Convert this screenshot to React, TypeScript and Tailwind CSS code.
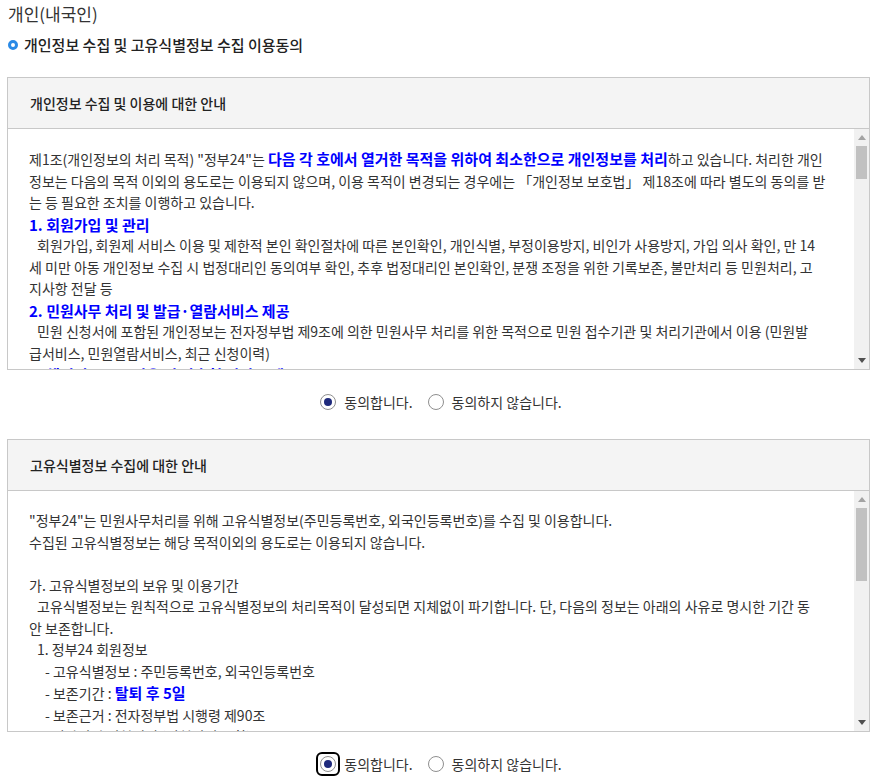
import type { ReactNode } from "react";

const B = ({ children }: { children: ReactNode }) => (
  <span className="text-[15px] font-bold text-[#0000ff]">{children}</span>
);

const H = ({ children }: { children: ReactNode }) => (
  <p className="text-[15px] font-bold text-[#0000ff]">{children}</p>
);

const Radio = ({
  checked,
  focused,
  label,
}: {
  checked?: boolean;
  focused?: boolean;
  label: string;
}) => (
  <label className="flex items-center gap-[8px]">
    <span
      className={`-m-[2px] flex h-[20px] w-[20px] items-center justify-center rounded-[4px] ${
        focused ? "outline-2 outline-black" : ""
      }`}
    >
      <span className="flex h-[16px] w-[16px] items-center justify-center rounded-full border border-[#8f8f8f] bg-white">
        {checked && <span className="h-[8px] w-[8px] rounded-full bg-[#1f2a7c]" />}
      </span>
    </span>
    <span>{label}</span>
  </label>
);

const Agree = ({ focused }: { focused?: boolean }) => (
  <div className="flex h-[20px] items-center justify-center gap-[15px] text-[14px] text-[#333]">
    <Radio checked focused={focused} label="동의합니다." />
    <Radio label="동의하지 않습니다." />
  </div>
);

// drawn scrollbar, scrolled to the top
const Scrollbar = ({ thumb }: { thumb: number }) => (
  <div className="flex w-[15px] shrink-0 flex-col bg-[#f1f1f1]">
    <div className="flex h-[17px] items-center justify-center">
      <svg width="8" height="5" viewBox="0 0 8 5">
        <path d="M0 5 L4 0 L8 5 Z" fill="#a3a3a3" />
      </svg>
    </div>
    <div className="flex-1 px-[2px]">
      <div className="w-full bg-[#c1c1c1]" style={{ height: thumb }} />
    </div>
    <div className="flex h-[17px] items-center justify-center">
      <svg width="8" height="5" viewBox="0 0 8 5">
        <path d="M0 0 L8 0 L4 5 Z" fill="#505050" />
      </svg>
    </div>
  </div>
);

const Box = ({
  title,
  thumb,
  children,
}: {
  title: string;
  thumb: number;
  children: ReactNode;
}) => (
  <div className="ml-[7px] mr-[12px] border border-[#c8c8c8]">
    <div className="flex h-[51px] items-center border-b border-[#c8c8c8] bg-[#f4f4f4] px-[22px] text-[14px] font-medium text-[#222]">
      {title}
    </div>
    <div className="flex h-[240px]">
      <div className="flex-1 overflow-hidden pl-[21px] pr-[20px] pt-[19px] text-[14px] leading-[21.5px] text-[#333]">
        {children}
      </div>
      <Scrollbar thumb={thumb} />
    </div>
  </div>
);

export default function App() {
  return (
    <div className="min-h-[784px] w-[882px] bg-white pt-[2px] font-['Noto_Sans_CJK_KR','Noto_Sans',sans-serif] text-[#333]">
      <h2 className="ml-[8px] text-[17px] leading-[24px] text-[#333]">개인(내국인)</h2>
      <div className="ml-[8px] mt-[8px] flex h-[22px] items-center gap-[6px] text-[15px] font-medium text-[#222]">
        <span className="h-[10px] w-[10px] rounded-full border-[3px] border-[#2a8ae6]" />
        개인정보 수집 및 고유식별정보 수집 이용동의
      </div>

      <div className="mt-[21px]">
        <Box title="개인정보 수집 및 이용에 대한 안내" thumb={33}>
          <p>
            제1조(개인정보의 처리 목적) "정부24"는{" "}
            <B>다음 각 호에서 열거한 목적을 위하여 최소한으로 개인정보를 처리</B>
            하고 있습니다. 처리한 개인정보는 다음의 목적 이외의 용도로는 이용되지 않으며, 이용
            목적이 변경되는 경우에는 「개인정보 보호법」 제18조에 따라 별도의 동의를 받는 등
            필요한 조치를 이행하고 있습니다.
          </p>
          <H>1. 회원가입 및 관리</H>
          <p className="indent-2">
            회원가입, 회원제 서비스 이용 및 제한적 본인 확인절차에 따른 본인확인, 개인식별,
            부정이용방지, 비인가 사용방지, 가입 의사 확인, 만 14
            <br />세 미만 아동 개인정보 수집 시 법정대리인 동의여부 확인, 추후 법정대리인
            본인확인, 분쟁 조정을 위한 기록보존, 불만처리 등 민원처리, 고
            <br />
            지사항 전달 등
          </p>
          <H>2. 민원사무 처리 및 발급·열람서비스 제공</H>
          <p className="indent-2">
            민원 신청서에 포함된 개인정보는 전자정부법 제9조에 의한 민원사무 처리를 위한
            목적으로 민원 접수기관 및 처리기관에서 이용 (민원발
            <br />
            급서비스, 민원열람서비스, 최근 신청이력)
          </p>
          <H>3. 행정정보 공동이용 및 맞춤형 서비스 제공</H>
          <p className="indent-2">
            민원 처리에 필요한 구비서류를 행정기관이 직접 확인하기 위한 행정정보 공동이용,
            생애주기별 맞춤형 서비스 안내 및 알림 서비스 제공
          </p>
          <H>4. 민원 신청 및 처리결과 통지</H>
          <p className="indent-2">
            신청한 민원의 접수, 처리상태, 처리결과를 문자메시지(SMS) 및 전자우편으로 통지
          </p>
        </Box>

        <div className="mb-[27px] mt-[22px]">
          <Agree />
        </div>

        <Box title="고유식별정보 수집에 대한 안내" thumb={73}>
          <p>"정부24"는 민원사무처리를 위해 고유식별정보(주민등록번호, 외국인등록번호)를 수집 및 이용합니다.</p>
          <p>수집된 고유식별정보는 해당 목적이외의 용도로는 이용되지 않습니다.</p>
          <br />
          <p>가. 고유식별정보의 보유 및 이용기간</p>
          <p className="indent-2">
            고유식별정보는 원칙적으로 고유식별정보의 처리목적이 달성되면 지체없이 파기합니다. 단,
            다음의 정보는 아래의 사유로 명시한 기간 동
            <br />안 보존합니다.
          </p>
          <p className="pl-2">1. 정부24 회원정보</p>
          <p className="pl-4">- 고유식별정보 : 주민등록번호, 외국인등록번호</p>
          <p className="pl-4">
            - 보존기간 : <B>탈퇴 후 5일</B>
          </p>
          <p className="pl-4">- 보존근거 : 전자정부법 시행령 제90조</p>
          <p className="pl-2">2. 전자민원 신청이력 (신청이력 포함)</p>
          <p className="pl-4">- 고유식별정보 : 주민등록번호, 외국인등록번호</p>
          <p className="pl-4">- 보존기간 : 5년</p>
        </Box>

        <div className="mt-[22px]">
          <Agree focused />
        </div>
      </div>
    </div>
  );
}
